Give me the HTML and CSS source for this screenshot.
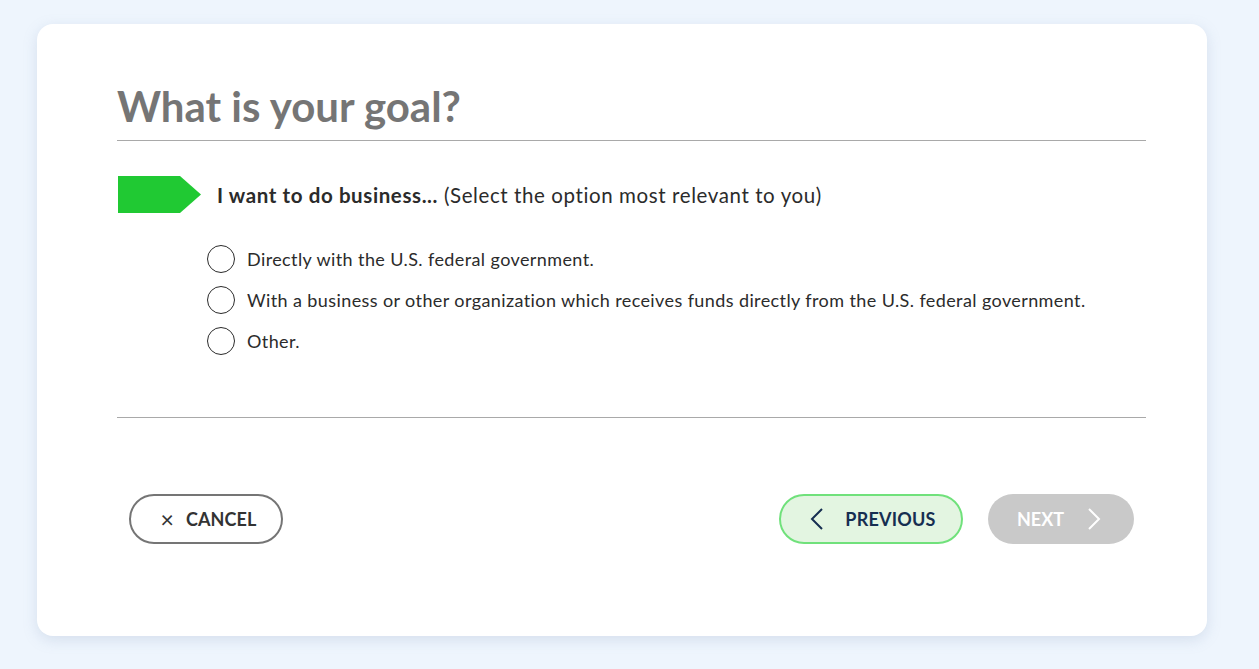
FILE: index.html
```html
<!DOCTYPE html>
<html lang="en">
<head>
<meta charset="utf-8">
<title>What is your goal?</title>
<link rel="stylesheet" href="styles.css">
</head>
<body>
<main class="card">
  <h1 class="title">What is your goal?</h1>
  <div class="intro">
    <svg class="tag" width="83" height="37" viewBox="0 0 83 37" aria-hidden="true"><polygon points="0,0 62,0 83,18.5 62,37 0,37" fill="#20c933"/></svg>
    <p class="intro-text"><strong>I want to do business...</strong> (Select the option most relevant to you)</p>
  </div>
  <ul class="options">
    <li class="option"><span class="radio"></span><span class="label">Directly with the U.S. federal government.</span></li>
    <li class="option"><span class="radio"></span><span class="label">With a business or other organization which receives funds directly from the U.S. federal government.</span></li>
    <li class="option"><span class="radio"></span><span class="label">Other.</span></li>
  </ul>
  <div class="actions">
    <button class="btn btn-cancel"><span class="x">×</span>CANCEL</button>
    <div class="nav">
      <button class="btn btn-prev">
        <svg width="14" height="22" viewBox="0 0 14 22" aria-hidden="true"><polyline points="12,1 2,11 12,21" fill="none" stroke="#162e51" stroke-width="2"/></svg>
        <span>PREVIOUS</span>
      </button>
      <button class="btn btn-next">
        <span>NEXT</span>
        <svg width="14" height="22" viewBox="0 0 14 22" aria-hidden="true"><polyline points="2,1 12,11 2,21" fill="none" stroke="#ffffff" stroke-width="2"/></svg>
      </button>
    </div>
  </div>
</main>
</body>
</html>
```

FILE: styles.css
```css
* { box-sizing: border-box; }
html, body { margin: 0; padding: 0; }
body {
  background: #eef5fd;
  font-family: "Lato", "Noto Sans", sans-serif;
  color: #2b2b2b;
  width: 1259px;
  height: 669px;
  overflow: hidden;
  padding-top: 24px;
}
.card {
  margin-left: 37px;
  width: 1170px;
  height: 612px;
  background: #ffffff;
  border-radius: 16px;
  box-shadow: 0 4px 14px rgba(140, 160, 190, 0.25);
  padding: 54px 61px 0 80px;
}
.title {
  margin: 0;
  font-size: 42px;
  font-weight: 700;
  line-height: 56px;
  color: #757575;
  padding-bottom: 6px;
  border-bottom: 1px solid #a9a9a9;
}
.intro {
  display: flex;
  align-items: center;
  height: 37px;
  margin-top: 35px;
  padding-left: 1px;
}
.tag { display: block; flex: none; }
.intro-text {
  margin: 0 0 0 16px;
  font-size: 20.5px;
  letter-spacing: 0.6px;
  color: #2b2b2b;
}
.intro-text strong { font-weight: 700; }
.options {
  list-style: none;
  margin: 25px 0 0 0;
  padding: 0 0 56px 90px;
  border-bottom: 1px solid #a9a9a9;
}
.option {
  display: flex;
  align-items: center;
  height: 41px;
  padding-top: 1px;
}
.radio {
  width: 28px;
  height: 28px;
  border: 1.5px solid #2b2b2b;
  border-radius: 50%;
  flex: none;
}
.label {
  margin-left: 12px;
  font-size: 18px;
  letter-spacing: 0.4px;
  color: #2b2b2b;
}
.actions {
  display: flex;
  justify-content: space-between;
  align-items: center;
  margin-top: 76px;
  padding: 0 12px;
}
.nav { display: flex; gap: 25px; }
.btn {
  height: 50px;
  border-radius: 25px;
  font-family: "Lato", "Noto Sans", sans-serif;
  font-weight: 700;
  font-size: 18px;
  display: flex;
  align-items: center;
  justify-content: center;
  padding: 0;
  cursor: pointer;
}
.btn-cancel {
  width: 154px;
  background: #ffffff;
  border: 2px solid #757575;
  color: #333333;
  letter-spacing: 0.1px;
  padding-left: 5px;
}
.btn-cancel .x {
  font-weight: 400;
  font-size: 23px;
  margin-right: 12px;
}
.btn-prev {
  width: 184px;
  background: #e3f5e1;
  border: 2px solid #70e17b;
  color: #162e51;
  gap: 21px;
  padding-left: 4px;
  letter-spacing: 0.2px;
}
.btn-next {
  width: 146px;
  background: #c9c9c9;
  border: none;
  color: #ffffff;
  gap: 23px;
  padding-right: 4px;
}
```
